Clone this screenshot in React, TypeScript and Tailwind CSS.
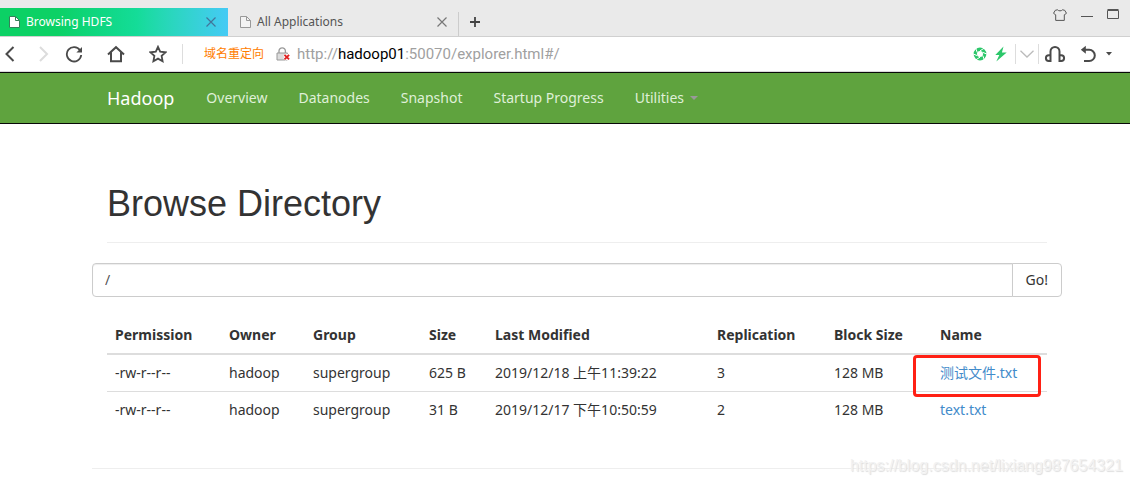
import React, { useState } from "react";

const navItems = ["Overview", "Datanodes", "Snapshot", "Startup Progress"];

const columns = [
  { title: "Permission", width: "w-[114px]" },
  { title: "Owner", width: "w-[84px]" },
  { title: "Group", width: "w-[116px]" },
  { title: "Size", width: "w-[66px]" },
  { title: "Last Modified", width: "w-[222px]" },
  { title: "Replication", width: "w-[117px]" },
  { title: "Block Size", width: "w-[106px]" },
  { title: "Name", width: "" },
];

const files = [
  {
    permission: "-rw-r--r--",
    owner: "hadoop",
    group: "supergroup",
    size: "625 B",
    modified: "2019/12/18 上午11:39:22",
    replication: 3,
    blockSize: "128 MB",
    name: "测试文件.txt",
    marked: true,
  },
  {
    permission: "-rw-r--r--",
    owner: "hadoop",
    group: "supergroup",
    size: "31 B",
    modified: "2019/12/17 下午10:50:59",
    replication: 2,
    blockSize: "128 MB",
    name: "text.txt",
    marked: false,
  },
];

const PageIcon = ({ className }: { className: string }) => (
  <svg viewBox="0 0 12 14" className={`h-3.5 w-3 shrink-0 ${className}`}>
    <path d="M1.5 1.5h6l4 4v7h-10z" strokeWidth="1" />
    <path d="M7.5 1.5v4h4" fill="none" strokeWidth="1" />
  </svg>
);

const CloseIcon = () => (
  <svg viewBox="0 0 10 10" className="h-2.5 w-2.5" stroke="currentColor">
    <path d="M.5.5l9 9M9.5.5l-9 9" strokeWidth="1.2" />
  </svg>
);

const TabBar = () => (
  <div className="flex h-[37px] items-end border-b border-[#d0d0d0] bg-[#eaeaea] text-xs">
    <div className="flex h-7 w-[228px] items-center bg-linear-to-r from-[#0cd165] from-25% via-[#14dc98] via-60% to-[#45caf5] pr-3 pl-2 text-white">
      <PageIcon className="fill-white stroke-[#35805a]" />
      <span className="ml-1.5 grow">Browsing HDFS</span>
      <button aria-label="Close Browsing HDFS" className="text-[#42759a]">
        <CloseIcon />
      </button>
    </div>
    <div className="flex h-7 w-[230px] items-center pr-[11px] pl-[11px] text-[#555]">
      <PageIcon className="fill-[#f3f3f3] stroke-[#999]" />
      <span className="ml-1.5 grow">All Applications</span>
      <button aria-label="Close All Applications" className="text-[#777]">
        <CloseIcon />
      </button>
    </div>
    <div className="flex h-6 items-center border-l border-[#ccc] pb-1 pl-[11px]">
      <button aria-label="New tab">
        <svg viewBox="0 0 10 10" className="h-2.5 w-2.5" stroke="#444">
          <path d="M5 0v10M0 5h10" strokeWidth="1.8" />
        </svg>
      </button>
    </div>
    <div className="ml-auto flex items-center gap-3.5 self-start pt-[9px] pr-[11px] text-[#555]">
      <button aria-label="Skins">
        <svg viewBox="0 0 14 12" className="h-3 w-3.5" fill="none" stroke="currentColor">
          <path d="M4.5.8c1 1.4 4 1.4 5 0l2.2.5 1.8 3-2.2 1.5V11.4H2.7V5.8L.5 4.3l1.8-3z" />
        </svg>
      </button>
      <button aria-label="Minimize">
        <svg viewBox="0 0 12 12" className="h-3 w-3" stroke="currentColor">
          <path d="M0 7.5h12" />
        </svg>
      </button>
      <button aria-label="Maximize">
        <svg viewBox="0 0 12 12" className="h-3 w-3" fill="none" stroke="currentColor">
          <path d="M.5 1.5h11v8H.5zM.5.5h11" />
        </svg>
      </button>
    </div>
  </div>
);

const AddressBar = () => (
  <div className="flex h-[35px] items-center border-b border-[#d9d9d9] bg-white text-[#4a4a4a]">
    <button aria-label="Back" className="ml-1">
      <svg viewBox="0 0 12 16" className="h-4 w-3" fill="none" stroke="currentColor" strokeWidth="2">
        <path d="M9.5 1L2.5 8l7 7" />
      </svg>
    </button>
    <button aria-label="Forward" className="ml-[22px] text-[#dcdcdc]">
      <svg viewBox="0 0 12 16" className="h-4 w-3" fill="none" stroke="currentColor" strokeWidth="2">
        <path d="M2 1l7 7-7 7" />
      </svg>
    </button>
    <button aria-label="Reload" className="ml-[15px]">
      <svg viewBox="0 0 18 18" className="h-[18px] w-[18px]" fill="none" stroke="currentColor" strokeWidth="1.8">
        <path d="M15 5.2A7.2 7.2 0 1 0 16.2 10" />
        <path d="M17 2v5.6h-5.6z" fill="currentColor" stroke="none" />
      </svg>
    </button>
    <button aria-label="Home" className="ml-6">
      <svg viewBox="0 0 18 18" className="h-[18px] w-[18px]" fill="none" stroke="currentColor" strokeWidth="2">
        <path d="M1 9.6L9 2.2l8 7.4M4 7.5v8.7h10V7.5" />
      </svg>
    </button>
    <button aria-label="Favorites" className="ml-6">
      <svg viewBox="0 0 18 18" className="h-[18px] w-[18px]" fill="none" stroke="currentColor" strokeWidth="1.8">
        <path d="M9 1.8l2.2 4.8 5.3.7-3.9 3.6 1 5.3L9 13.6l-4.6 2.6 1-5.3-3.9-3.6 5.3-.7z" />
      </svg>
    </button>
    <span className="ml-[15px] h-5 border-l border-[#ddd]" />
    <span className="ml-[21px] text-xs text-[#ff7d00]">域名重定向</span>
    <svg viewBox="0 0 14 14" className="ml-3 h-3.5 w-3.5 shrink-0" fill="none">
      <path d="M3 6V4a3.2 3.2 0 0 1 6.4 0v2" stroke="#999" strokeWidth="1.3" />
      <path d="M1 6h10.5v7H1z" fill="#ddd" stroke="#999" />
      <path d="M8.5 7.8l4.6 4.6M13.1 7.8l-4.6 4.6" stroke="#fff" strokeWidth="3.5" />
      <path d="M8.5 7.8l4.6 4.6M13.1 7.8l-4.6 4.6" stroke="#e02020" strokeWidth="1.8" />
    </svg>
    <span className="ml-[7px] grow font-[Roboto,sans-serif] text-[15px] leading-5 text-[#a0a0a0]">
      http://<span className="text-black">hadoop01</span>:50070/explorer.html#/
    </span>
    <button aria-label="Speed mode">
      <svg viewBox="0 0 14 14" className="h-3.5 w-3.5" fill="none" stroke="#2cc76a">
        <circle cx="7" cy="7" r="4.7" strokeWidth="3.4" />
        <path
          d="M7 3.8L11.5 1M9.8 5.4L13.8 7M9.8 8.6l1.6 4.4M7 10.2L2.5 13M4.2 8.6L.2 7M4.2 5.4L2.6 1"
          stroke="#fff"
        />
      </svg>
    </button>
    <button aria-label="Boost" className="ml-2">
      <svg viewBox="0 0 12 16" className="h-4 w-3" fill="#2cc76a">
        <path d="M8.5.5L.3 8.9h4L1.3 15.5l10.4-9H6.9z" />
      </svg>
    </button>
    <span className="ml-2 h-5 border-l border-[#ddd]" />
    <button aria-label="More addresses" className="ml-1 text-[#bbb]">
      <svg viewBox="0 0 14 8" className="h-2 w-3.5" fill="none" stroke="currentColor" strokeWidth="1.3">
        <path d="M.5.8L7 7l6.5-6.2" />
      </svg>
    </button>
    <span className="ml-1 h-5 border-l border-[#ddd]" />
    <button aria-label="Headphones" className="ml-[5px]">
      <svg viewBox="0 0 22 18" className="h-[18px] w-[22px]" fill="none" stroke="currentColor" strokeWidth="2">
        <path d="M6.5 17V6.5a4.5 4.5 0 0 1 9 0V17" />
        <path d="M6.5 10.2H4.8a2.8 2.8 0 0 0 0 5.8h1.7M15.5 10.2h1.7a2.8 2.8 0 0 1 0 5.8h-1.7" />
      </svg>
    </button>
    <button aria-label="Undo" className="ml-3.5">
      <svg viewBox="0 0 16 18" className="h-[18px] w-4" fill="none" stroke="currentColor" strokeWidth="2">
        <path d="M4 4.8h5.2a5.6 5.6 0 0 1 0 11.2H4" />
        <path d="M5.8.8v8L.8 4.8z" fill="currentColor" stroke="none" />
      </svg>
    </button>
    <button aria-label="Undo history" className="mr-[18px] ml-2.5">
      <svg viewBox="0 0 6 4" className="h-1 w-1.5" fill="currentColor">
        <path d="M0 0h6L3 3.5z" />
      </svg>
    </button>
  </div>
);

const Navbar = () => (
  <nav className="flex h-[52px] items-center gap-px border-y border-[#080808] bg-[#5fa33e] pl-[107px] text-[#dff0d8]">
    <a href="#" className="mr-4 text-lg text-white">
      Hadoop
    </a>
    {navItems.map((item) => (
      <a key={item} href="#" className="px-[15px]">
        {item}
      </a>
    ))}
    <button className="flex items-center gap-1.5 px-[15px]">
      Utilities
      <svg viewBox="0 0 8 4" className="h-1 w-2" fill="#999">
        <path d="M0 0h8L4 4z" />
      </svg>
    </button>
  </nav>
);

const App = () => {
  const [path, setPath] = useState("/");

  return (
    <div className="relative bg-white font-['Noto_Sans','Noto_Sans_CJK_SC',sans-serif] text-sm leading-5 text-[#333]">
      <TabBar />
      <AddressBar />
      <Navbar />
      <main className="mr-[68px] ml-[92px] pt-[60px] pb-[15px]">
        <div className="mx-[15px] mb-5 border-b border-[#eee] pb-[18px]">
          <h1 className="font-['Liberation_Sans',sans-serif] text-4xl leading-10">
            Browse Directory
          </h1>
        </div>
        <form className="flex h-[34px]" onSubmit={(e) => e.preventDefault()}>
          <input
            type="text"
            aria-label="Directory"
            value={path}
            onChange={(e) => setPath(e.target.value)}
            className="min-w-0 grow rounded-l border border-[#ccc] px-3 text-[#555] shadow-[inset_0_1px_1px_rgba(0,0,0,0.075)] outline-none"
          />
          <button
            type="submit"
            className="-ml-px rounded-r border border-[#ccc] bg-white px-[13px]"
          >
            Go!
          </button>
        </form>
        <div className="mx-[15px] mt-5">
          <table className="w-full table-fixed border-collapse text-left whitespace-nowrap">
            <thead>
              <tr className="border-b-2 border-[#ddd]">
                {columns.map((col) => (
                  <th key={col.title} className={`p-2 font-bold ${col.width}`}>
                    {col.title}
                  </th>
                ))}
              </tr>
            </thead>
            <tbody>
              {files.map((file) => (
                <tr key={file.name} className="border-t border-[#ddd]">
                  <td className="p-2">{file.permission}</td>
                  <td className="p-2">{file.owner}</td>
                  <td className="p-2">{file.group}</td>
                  <td className="p-2">{file.size}</td>
                  <td className="p-2">{file.modified}</td>
                  <td className="p-2">{file.replication}</td>
                  <td className="p-2">{file.blockSize}</td>
                  <td className="relative p-2">
                    <a href="#" className="text-[#428bca]">
                      {file.name}
                    </a>
                    {file.marked && (
                      <span className="pointer-events-none absolute top-0 right-1.5 -bottom-1.5 -left-[19px] rounded border-3 border-[#ff2014]" />
                    )}
                  </td>
                </tr>
              ))}
            </tbody>
          </table>
        </div>
        <hr className="mt-10 border-[#eee]" />
      </main>
      <p className="absolute right-[7px] bottom-2 font-['Liberation_Sans',sans-serif] text-base leading-5 text-[#f2f2f2] [text-shadow:1px_1px_1px_#ddd]">
        https://blog.csdn.net/lixiang987654321
      </p>
    </div>
  );
};

export default App;
